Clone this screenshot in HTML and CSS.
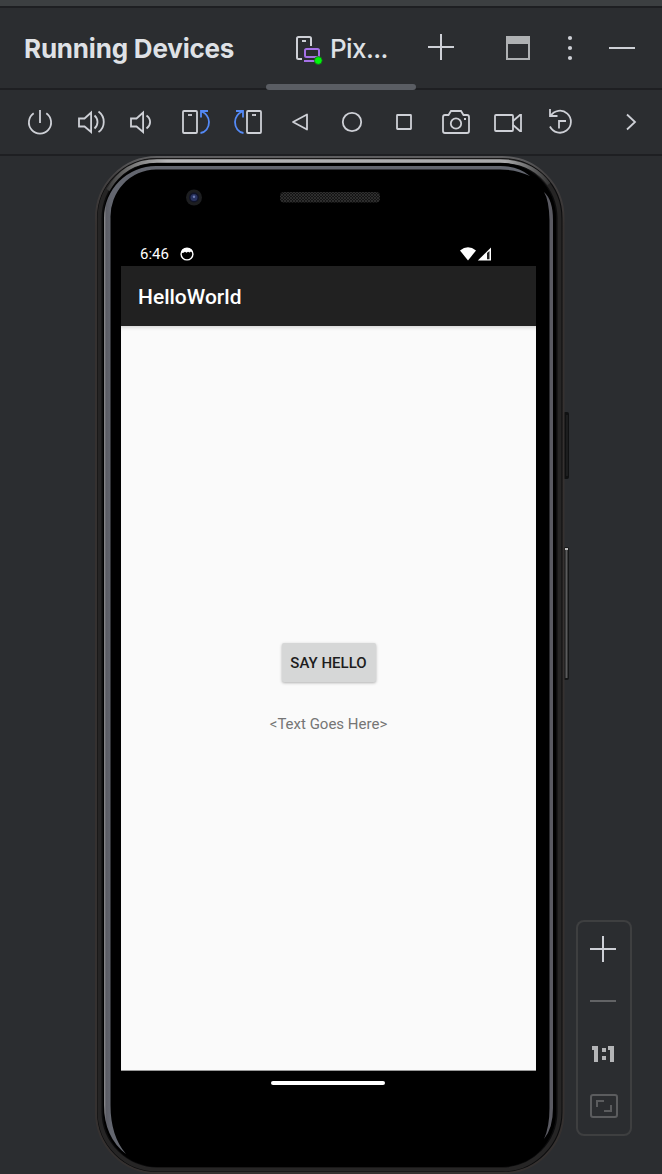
FILE: index.html
```html
<!DOCTYPE html>
<html lang="en">
<head>
<meta charset="utf-8">
<title>Running Devices</title>
<link rel="stylesheet" href="styles.css">
</head>
<body>
<div class="window">
  <div class="top-strip"></div>
  <header class="header">
    <h1 class="title">Running Devices</h1>
    <div class="tab">
      <svg class="tab-icon" width="28" height="30" viewBox="0 0 28 30" fill="none" stroke-width="2">
        <path d="M7 24H3.500Q2 24 2 22.500V3.500Q2 2 3.500 2H14.500Q16 2 16 3.500V11" stroke="#ced0d6"/>
        <path d="M7 6H11" stroke="#ced0d6"/>
        <rect x="10" y="14" width="14" height="8" rx="1.500" stroke="#a571e6"/>
        <path d="M9 26H20" stroke="#a571e6"/>
        <circle cx="23.300" cy="25.500" r="3.900" fill="#00f50c" stroke="#1c5c20" stroke-width=".8"/>
      </svg>
      <span class="tab-label">Pix...</span>
    </div>
    <svg class="header-tools" width="246" height="80" viewBox="416 8 246 80" fill="none" stroke="#ced0d6" stroke-width="2">
      <path d="M428 47H454M441 34V60"/>
      <path d="M507 37H529V59H507Z" stroke="#afb1b3"/>
      <path d="M506 36H530V44H506Z" fill="#afb1b3" stroke="none"/>
      <g fill="#ced0d6" stroke="none"><circle cx="570" cy="38" r="2.100"/><circle cx="570" cy="48" r="2.100"/><circle cx="570" cy="58" r="2.100"/></g>
      <path d="M609 48H635"/>
    </svg>
  </header>

  <nav class="toolbar">
    <svg class="tool" viewBox="-26 -32 52 64"><path d="M-6.300-8.700A11.100 11.100 0 1 0 6.300-8.700M0-12V1"/></svg>
    <svg class="tool" viewBox="-26 -32 52 64"><path d="M-13-3.500H-7.500L-.9-9.500V10L-7.500 4.500H-13Z M2.500-6.500C6.500-3 6.500 3 2.500 6.500M6.500-10.500C13.500-5.500 13.500 5.500 6.500 10"/></svg>
    <svg class="tool" viewBox="-26 -32 52 64"><path d="M-13-3.500H-7.500L-.9-9.500V10L-7.500 4.500H-13Z M2.500-6.500C7.300-3 7.300 3 2.500 6.500"/></svg>
    <svg class="tool" viewBox="-26 -32 52 64"><rect x="-13" y="-11" width="14" height="22" rx="1"/><path d="M-8-7H-4"/><path class="blue" d="M5-4.500V-11H12M5-11C10-8.500 13-4.500 13 0C13 6 9.500 10.500 4.500 11"/></svg>
    <svg class="tool" viewBox="-26 -32 52 64"><g transform="scale(-1 1)"><rect x="-13" y="-11" width="14" height="22" rx="1"/><path d="M-8-7H-4"/><path class="blue" d="M5-4.500V-11H12M5-11C10-8.500 13-4.500 13 0C13 6 9.500 10.500 4.500 11"/></g></svg>
    <svg class="tool" viewBox="-26 -32 52 64"><path stroke-linejoin="round" d="M-7 0L7-7.500V7.500Z"/></svg>
    <svg class="tool" viewBox="-26 -32 52 64"><circle r="9.200"/></svg>
    <svg class="tool" viewBox="-26 -32 52 64"><rect x="-7" y="-7" width="14" height="14" rx=".5"/></svg>
    <svg class="tool" viewBox="-26 -32 52 64"><path d="M-13-5Q-13-7-11-7H-7.500L-5-11H5L7.500-7H11Q13-7 13-5V9Q13 11 11 11H-11Q-13 11-13 9Z"/><circle cy="1.500" r="5.200"/><path d="M8-3H10"/></svg>
    <svg class="tool" viewBox="-26 -32 52 64"><rect x="-13" y="-7" width="18" height="16" rx="1"/><path d="M5-1L12-7H13V9H12L5 3"/></svg>
    <svg class="tool" viewBox="-26 -32 52 64"><path d="M-10 4.500A11 11 0 1 0-9.500-6M-10-13V-6H-2.500M-1 6.500V-1H6"/></svg>
    <svg class="tool tool-more" viewBox="-26 -32 52 64"><path d="M-4-7.500L4 0L-4 7.500"/></svg>
  </nav>

  <main class="stage">
    <svg class="device-frame" width="662" height="1018" viewBox="0 156 662 1018" fill="none">
      <defs>
        <linearGradient id="rim" x1="0" y1="156" x2="0" y2="225" gradientUnits="userSpaceOnUse">
          <stop offset="0" stop-color="#606062"/><stop offset=".25" stop-color="#454344"/><stop offset="1" stop-color="#353130"/>
        </linearGradient>
        <linearGradient id="shine" x1="105" y1="0" x2="550" y2="0" gradientUnits="userSpaceOnUse">
          <stop offset="0" stop-color="#333"/><stop offset=".06" stop-color="#777"/><stop offset=".14" stop-color="#b5b5b7"/><stop offset=".9" stop-color="#a8a8aa"/><stop offset="1" stop-color="#333"/>
        </linearGradient>
        <linearGradient id="edge" x1="104" y1="0" x2="111" y2="0" gradientUnits="userSpaceOnUse">
          <stop offset="0" stop-color="#929294"/><stop offset=".3" stop-color="#5b5c64"/><stop offset="1" stop-color="#63666f"/>
        </linearGradient>
        <pattern id="mesh" width="3" height="3" patternUnits="userSpaceOnUse">
          <rect width="3" height="3" fill="#141414"/><path d="M0 0L3 3M3 0L0 3" stroke="#3c3c3c" stroke-width=".6"/>
        </pattern>
      </defs>
      <rect x="563" y="412" width="6" height="67" rx="2" fill="#101112"/>
      <path d="M567 415V476" stroke="#292a2b"/>
      <rect x="563" y="547" width="6" height="133" rx="2" fill="#151617"/>
      <path d="M566.500 549V678" stroke="#5b5b5c" stroke-width="2"/>
      <path d="M565 549H568" stroke="#bbb" stroke-width="2"/>
      <rect x="96" y="157" width="467.500" height="1016" rx="61" fill="#0c0c0d" stroke="url(#rim)" stroke-width="2"/>
      <rect x="99.500" y="160.500" width="460" height="1009" rx="58" stroke="#262525" stroke-width="4"/>
      <path d="M108 190C119 171 136 161 157 161H500C520 161 537 168 549 184" stroke="url(#shine)" stroke-width="3.500"/>
      <rect x="103" y="163" width="453" height="1004" rx="55" fill="#000"/>
      <path d="M104 218A52 52 0 0 1 156 166H500Q518 166 530 176Q517 169.500 500 169.500H156A46 47 0 0 0 110.500 218V1105Q110.500 1136 126 1154Q104 1137 104 1105Z" fill="url(#edge)"/>
      <path d="M544 192Q549 200 549.500 220V1108Q549.500 1127 544 1139Q553 1128 553 1108V220Q553 200 544 192Z" fill="#5a5a62"/>
      <circle cx="194" cy="197.500" r="8" fill="#1d1e20"/>
      <circle cx="194" cy="197.500" r="5" fill="#101327"/>
      <circle cx="194" cy="197.500" r="3.500" fill="#293360"/>
      <circle cx="194" cy="196.800" r="1.200" fill="#6d7bb2"/>
      <rect x="280" y="192" width="100" height="10.500" rx="4" fill="url(#mesh)"/>
    </svg>

    <section class="screen">
      <div class="status-bar">
        <span class="clock">6:46</span>
        <svg width="14" height="14" viewBox="0 0 14 14">
          <circle cx="7" cy="7" r="5.900" fill="none" stroke="#fff" stroke-width="1.400"/>
          <path d="M1.500 6Q2 1 7 1Q12 1 12.500 6L11 4.600L9.600 5.600L8 4.700L6.500 5.800L5 4.700L3.500 5.800Z" fill="#fff"/>
        </svg>
        <svg class="signals" width="32" height="14" viewBox="0 0 32 14">
          <path d="M0 3.500Q8-3 16 3.500L8 13.500Z" fill="#fff"/>
          <path d="M17.800 13.500L31 .5V13.500Z" fill="#fff"/>
          <path d="M27 6V12.300H29.500V4Z" fill="#222"/>
        </svg>
      </div>
      <div class="app-bar">HelloWorld</div>
      <div class="app-content">
        <button class="hello-button">SAY HELLO</button>
        <p class="placeholder">&lt;Text Goes Here&gt;</p>
      </div>
      <div class="gesture-pill"></div>
    </section>

    <aside class="zoom-panel">
      <svg width="56" height="216" viewBox="576 920 56 216" fill="none" stroke-width="2">
        <path d="M590 949H616M603 936V962" stroke="#ced0d6"/>
        <path d="M590 1001H616" stroke="#626365"/>
        <rect x="591" y="1095" width="26" height="22" rx="2" stroke="#5b5c5e"/>
        <path d="M597 1107V1101H604M611 1105V1111H604" stroke="#5b5c5e"/>
        <g fill="#b4b5b7"><path d="M592 1046H598V1062H594V1050H592ZM608 1046H614V1062H610V1050H608ZM602 1048H606V1052H602ZM602 1056H606V1060H602Z"/></g>
      </svg>
    </aside>
  </main>
</div>
</body>
</html>
```
FILE: styles.css
```css
* { box-sizing: border-box; }

body {
  margin: 0;
  background: #2b2d30;
  color: #dfe1e5;
  font-family: Inter, "Liberation Sans", sans-serif;
}

.window {
  display: flex;
  flex-direction: column;
  width: 662px;
  height: 1174px;
  overflow: hidden;
}

.top-strip {
  height: 8px;
  background: #3c3f41;
  border-bottom: 2px solid #1e1f22;
}

.header {
  display: flex;
  height: 82px;
  padding-left: 24px;
  border-bottom: 2px solid #1e1f22;
}

.title {
  width: 242px;
  margin: 0;
  font-size: 26px;
  font-weight: 700;
  letter-spacing: -0.2px;
  line-height: 81px;
  white-space: nowrap;
}

.tab {
  position: relative;
  display: flex;
  gap: 7px;
  width: 150px;
  padding-left: 29px;
}

.tab::after {
  content: "";
  position: absolute;
  left: 0;
  bottom: -2px;
  width: 150px;
  height: 6px;
  border-radius: 3px;
  background: #5a5d63;
}

.tab-icon { margin-top: 27px; }

.tab-label {
  font-size: 26px;
  font-weight: 500;
  letter-spacing: -0.6px;
  line-height: 81px;
}

.toolbar {
  display: flex;
  height: 66px;
  padding-left: 14px;
  border-bottom: 2px solid #1e1f22;
}

.tool {
  flex: none;
  width: 52px;
  height: 64px;
  fill: none;
  stroke: #ced0d6;
  stroke-width: 1.8;
}

.tool .blue { stroke: #548af7; }

.tool-more { margin-left: 19px; }

.stage {
  position: relative;
  height: 1018px;
}

.device-frame {
  position: absolute;
  inset: 0;
}

.screen {
  position: relative;
  width: 415px;
  margin-left: 121px;
  padding-top: 86px;
  font-family: Roboto, sans-serif;
}

.status-bar {
  display: flex;
  align-items: center;
  height: 24px;
  padding: 0 44px 0 19px;
  color: #fff;
}

.clock {
  width: 40px;
  font-size: 15px;
}

.signals { margin-left: auto; }

.app-bar {
  height: 60px;
  padding-left: 17px;
  background: #212121;
  color: #fff;
  font-size: 21px;
  font-weight: 500;
  line-height: 62px;
}

.app-content {
  display: flex;
  flex-direction: column;
  align-items: center;
  height: 745px;
  padding-top: 317px;
  background: #fafafa;
  box-shadow: inset 0 4px 4px -3px #ccc, inset 0 -1px #999;
}

.hello-button {
  width: 94px;
  height: 39px;
  margin-bottom: 1px;
  padding: 0;
  border: 0;
  border-radius: 2px;
  background: #d6d7d7;
  box-shadow: 0 1px 3px rgb(0 0 0 / 30%);
  color: #1d1d1d;
  font: 500 15px/40px Roboto, sans-serif;
}

.placeholder {
  margin: 31px 0 0;
  color: #757575;
  font-size: 15px;
  line-height: 21px;
}

.gesture-pill {
  width: 114px;
  height: 4px;
  margin: 10px auto 0 150px;
  border-radius: 2px;
  background: #fff;
}

.zoom-panel {
  position: absolute;
  left: 576px;
  top: 764px;
  height: 216px;
  border-radius: 8px;
  box-shadow: inset 0 0 0 2px #3e3f40;
}
```
